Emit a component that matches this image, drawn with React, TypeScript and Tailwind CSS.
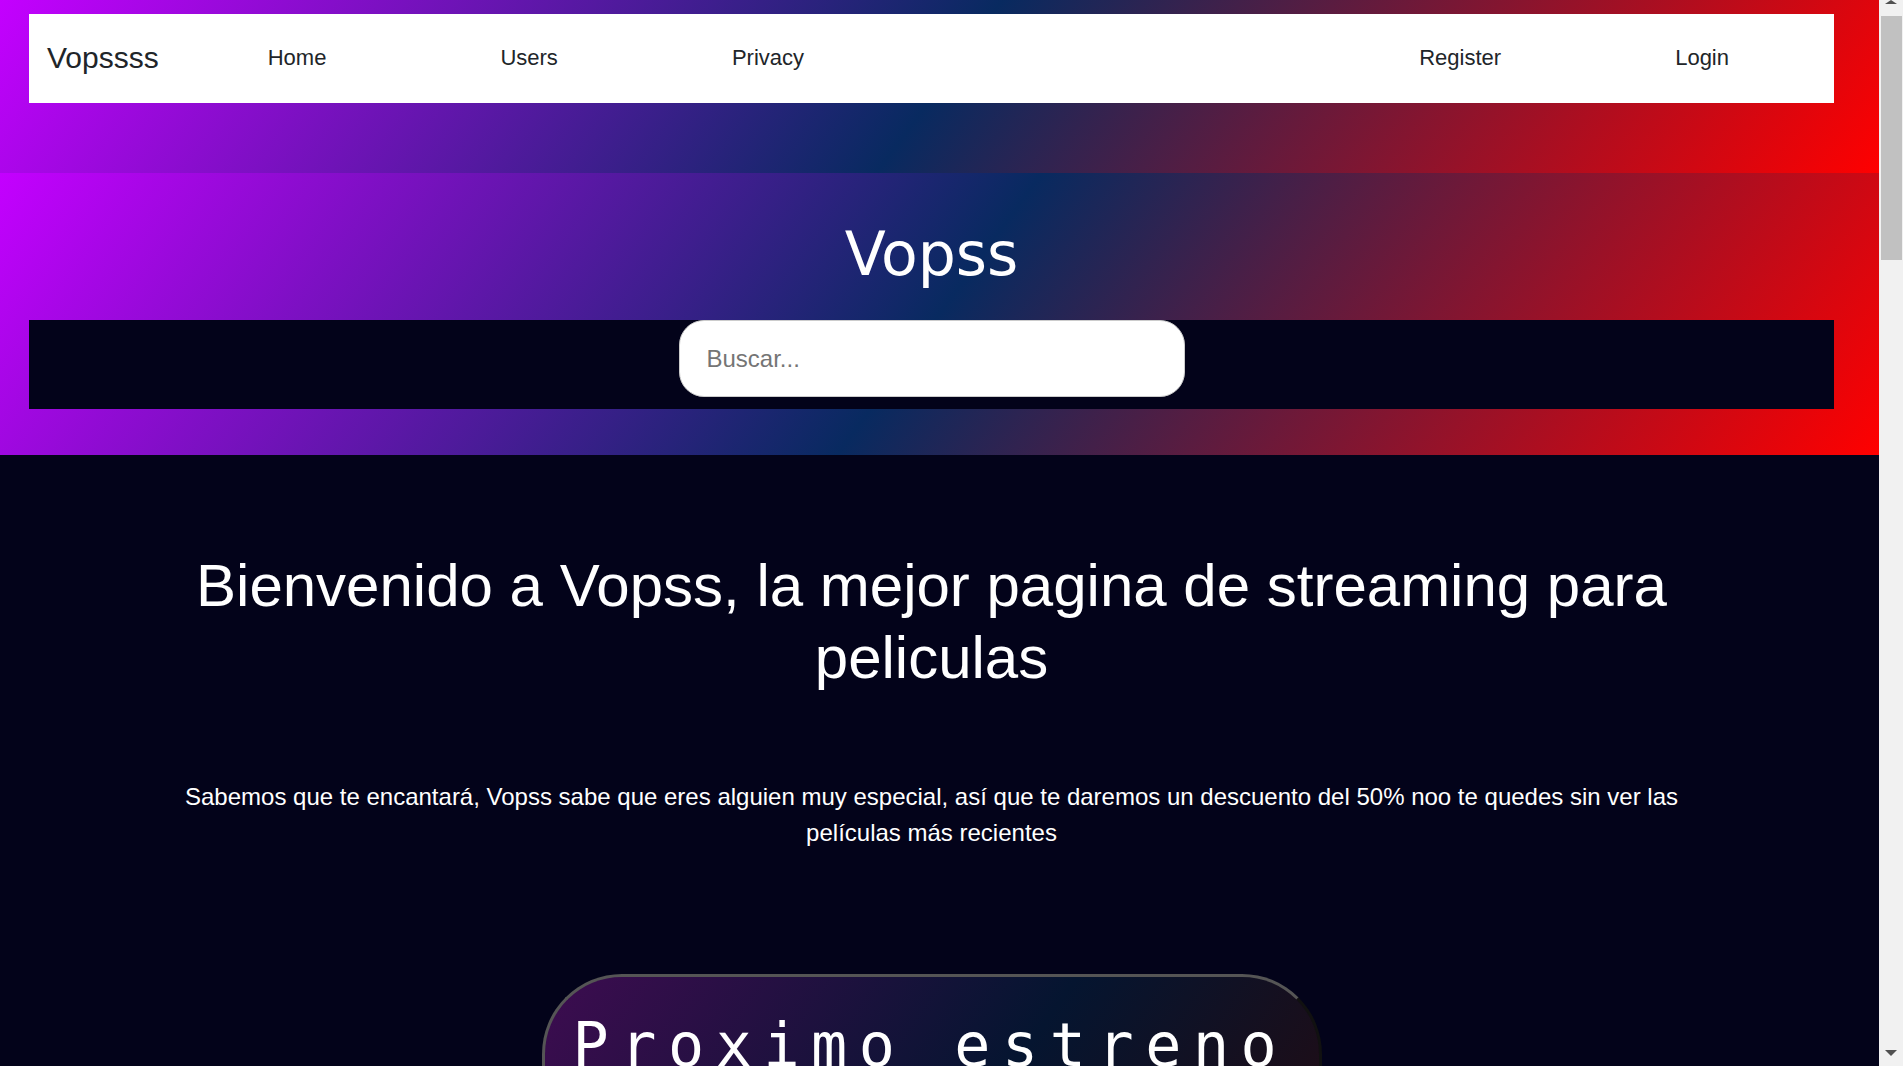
export default function App() {
  const leftLinks = ["Home", "Users", "Privacy"];
  const rightLinks = ["Register", "Login"];

  return (
    <div className="flex bg-[#03031a] font-['Liberation_Sans',Arial,sans-serif]">
      <div className="flex-1 min-w-0">
        {/* Navbar */}
        <header className="bg-[linear-gradient(126deg,#c400ff_0%,#082a60_50%,#ff0000_100%)] pt-[14px] pb-[70px]">
          <nav className="ml-[29px] w-[1805px] h-[89px] bg-white flex items-center pl-[18px] pr-[18px] pb-[2px] text-[#212529]">
            <a href="#" className="text-[30px] mr-[22px]">Vopssss</a>
            {leftLinks.map((l) => (
              <a key={l} href="#" className="px-[87px] text-[22px]">{l}</a>
            ))}
            <div className="flex-1" />
            {rightLinks.map((l) => (
              <a key={l} href="#" className="px-[87px] text-[22px]">{l}</a>
            ))}
          </nav>
        </header>

        {/* Title + search */}
        <section className="bg-[linear-gradient(126deg,#c400ff_0%,#082a60_50%,#ff0000_100%)] pt-[47px] pb-[46px]">
          <div className="ml-[29px] w-[1805px]">
            <h1 className="text-center text-white text-[60px] leading-[69px] font-normal font-['DejaVu_Sans',sans-serif]">
              Vopss
            </h1>
            <div className="mt-[31px] h-[89px] bg-[#03031a] flex justify-center items-start">
              <input
                type="text"
                placeholder="Buscar..."
                className="w-[506px] h-[77px] rounded-[25px] border border-[#cccccc] bg-white px-[27px] text-[24px] text-[#212529] placeholder:text-[#757575] outline-none"
              />
            </div>
          </div>
        </section>

        {/* Main */}
        <main className="pt-[95px] min-h-[4000px]">
          <div className="ml-[29px] w-[1805px] flex flex-col items-center text-white">
            <h2 className="w-[1540px] text-center text-[60px] leading-[72px] font-normal">
              Bienvenido a Vopss, la mejor pagina de streaming para peliculas
            </h2>
            <p className="mt-[85px] w-[1540px] text-center text-[24px] leading-[36px]">
              Sabemos que te encantará, Vopss sabe que eres alguien muy especial, así que te daremos un descuento del 50% noo te quedes sin ver las películas más recientes
            </p>

            {/* Proximo estreno */}
            <div className="mt-[123px] w-[780px] h-[420px] rounded-[80px] border-[3px] border-t-[#555555] border-l-[#555555] border-r-[#111111] border-b-[#111111] bg-[linear-gradient(125deg,#3d0c50_0%,#051530_50%,#2c0808_100%)] pt-[33px] pl-[28px]">
              <h3 className="text-[60px] leading-[70px] tracking-[11.6px] font-normal font-['DejaVu_Sans_Mono',monospace] whitespace-nowrap">
                Proximo estreno
              </h3>
            </div>
          </div>
        </main>
      </div>

      {/* Scrollbar look-alike */}
      <aside className="sticky top-0 h-screen w-[24px] shrink-0 bg-[#f1f1f1] flex flex-col items-center">
        <div className="h-[16px] flex items-start justify-center">
          <div className="w-0 h-0 border-l-[6px] border-r-[6px] border-b-[4px] border-l-transparent border-r-transparent border-b-[#505050]" />
        </div>
        <div className="w-[21px] h-[244px] bg-[#c1c1c1]" />
        <div className="flex-1" />
        <div className="h-[16px] flex items-start justify-center">
          <div className="w-0 h-0 border-l-[6px] border-r-[6px] border-t-[6px] border-l-transparent border-r-transparent border-t-[#505050]" />
        </div>
      </aside>
    </div>
  );
}
